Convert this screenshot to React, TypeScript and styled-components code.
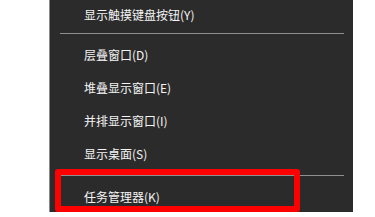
import React from 'react';
import styled, { createGlobalStyle } from 'styled-components';

const GlobalStyle = createGlobalStyle`
  html, body {
    margin: 0;
    padding: 0;
    background: #ffffff;
  }
`;

const Page = styled.div`
  width: 375px;
  height: 217px;
  overflow: hidden;
  background: #ffffff;
`;

const Menu = styled.div`
  position: relative;
  margin-left: 49px;
  width: 303px;
  height: 212px;
  background-color: #2b2b2b;
  border-left: 1px solid #8a8a8a;
  display: flex;
  flex-direction: column;
  font-family: "Noto Sans CJK SC", "Microsoft YaHei", sans-serif;
  font-size: 12px;
  color: #f4f4f4;
`;

const Item = styled.div<{ $height?: number }>`
  height: ${(p) => p.$height ?? 33}px;
  display: flex;
  align-items: center;
  padding-left: 34px;
  white-space: nowrap;
  cursor: default;
`;

const Separator = styled.div`
  height: 1px;
  margin: 5px 9px 4px 10px;
  background-color: #8f8f8f;
`;

const Highlight = styled.div`
  position: absolute;
  left: 5px;
  top: 169px;
  width: 245px;
  height: 43px;
  box-sizing: border-box;
  border: 6px solid #ff0000;
  border-radius: 3px;
  pointer-events: none;
`;

type Entry = { label: string; height?: number } | 'sep';

const entries: Entry[] = [
  { label: '显示触摸键盘按钮(Y)', height: 28 },
  'sep',
  { label: '层叠窗口(D)' },
  { label: '堆叠显示窗口(E)' },
  { label: '并排显示窗口(I)' },
  { label: '显示桌面(S)' },
  'sep',
  { label: '任务管理器(K)', height: 32 },
];

export default function App() {
  return (
    <Page>
      <GlobalStyle />
      <Menu>
        {entries.map((e, i) =>
          e === 'sep' ? (
            <Separator key={i} />
          ) : (
            <Item key={i} $height={e.height}>
              {e.label}
            </Item>
          )
        )}
        <Highlight />
      </Menu>
    </Page>
  );
}
